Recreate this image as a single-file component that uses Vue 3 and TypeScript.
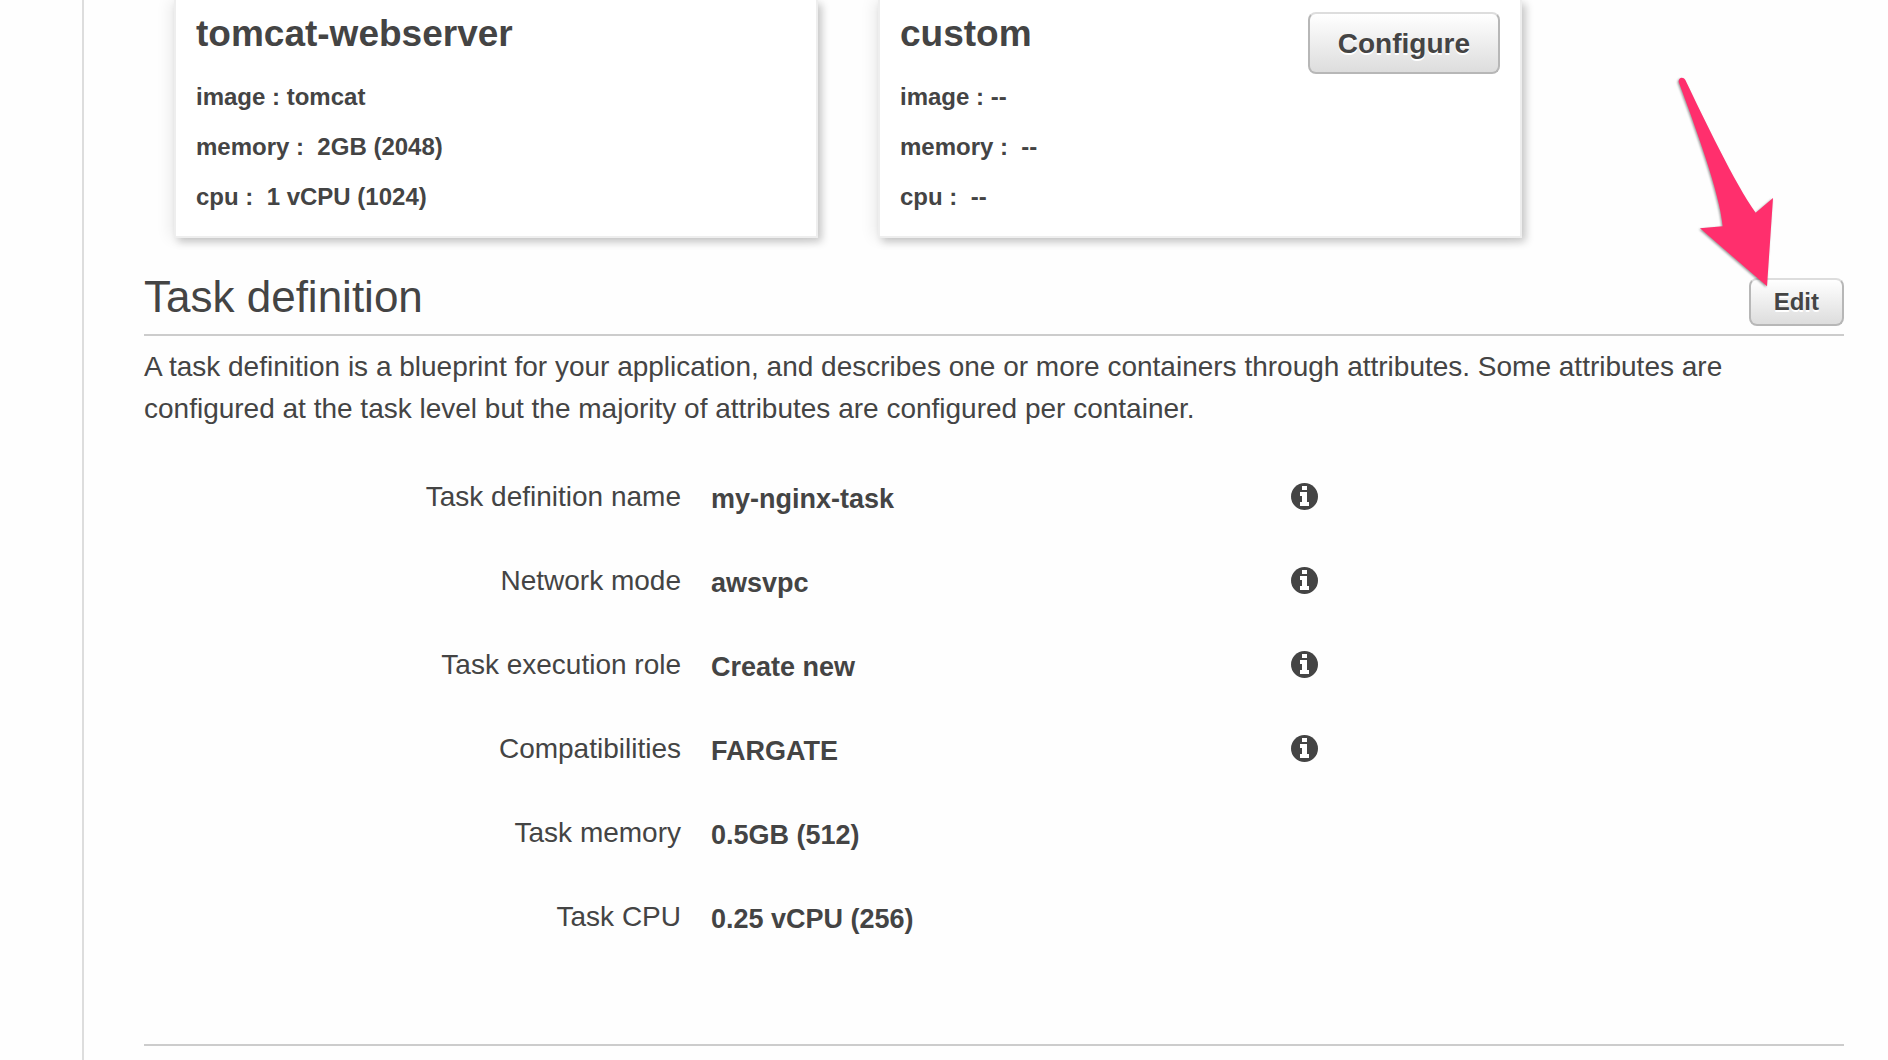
<script setup lang="ts">
interface ContainerCard {
  name: string
  image: string
  memory: string
  cpu: string
  configurable: boolean
}

interface TaskField {
  label: string
  value: string
  info: boolean
}

const containers: ContainerCard[] = [
  { name: 'tomcat-webserver', image: 'tomcat', memory: '2GB (2048)', cpu: '1 vCPU (1024)', configurable: false },
  { name: 'custom', image: '--', memory: '--', cpu: '--', configurable: true },
]

const fields: TaskField[] = [
  { label: 'Task definition name', value: 'my-nginx-task', info: true },
  { label: 'Network mode', value: 'awsvpc', info: true },
  { label: 'Task execution role', value: 'Create new', info: true },
  { label: 'Compatibilities', value: 'FARGATE', info: true },
  { label: 'Task memory', value: '0.5GB (512)', info: false },
  { label: 'Task CPU', value: '0.25 vCPU (256)', info: false },
]
</script>

<template>
  <div class="page">
    <main class="content">
      <section class="cards">
        <article v-for="card in containers" :key="card.name" class="card">
          <div class="card-text">
            <h3 class="card-title">{{ card.name }}</h3>
            <p class="card-line">image : {{ card.image }}</p>
            <p class="card-line">memory :&nbsp; {{ card.memory }}</p>
            <p class="card-line">cpu :&nbsp; {{ card.cpu }}</p>
          </div>
          <button v-if="card.configurable" type="button" class="btn btn-large">Configure</button>
        </article>
      </section>

      <section class="task">
        <header class="task-header">
          <h2 class="task-title">Task definition</h2>
          <button type="button" class="btn">Edit</button>
          <svg class="arrow" viewBox="108 48 300 639" aria-hidden="true">
            <path
              d="M116 66 C115 51 130 49 136 60 C190 172 285 372 347 458 L399 414 L381 679 L180 505 L248 499 C240 400 162 190 116 66 Z"
              fill="#ff2f6d"
            />
          </svg>
        </header>

        <p class="task-intro">
          A task definition is a blueprint for your application, and describes one or more containers through
          attributes. Some attributes are configured at the task level but the majority of attributes are configured
          per container.
        </p>

        <dl class="fields">
          <div v-for="field in fields" :key="field.label" class="field">
            <dt class="field-label">{{ field.label }}</dt>
            <dd class="field-value">{{ field.value }}</dd>
            <dd v-if="field.info" class="field-info">
              <button type="button" class="info" :aria-label="`About ${field.label}`">
                <svg viewBox="0 0 27 27" aria-hidden="true">
                  <circle cx="13.5" cy="13.5" r="13.5" fill="#444" />
                  <path d="M11 3h5v4h-5z M9 9h7v10h2v4H9v-4h2v-6H9z" fill="#fff" />
                </svg>
              </button>
            </dd>
          </div>
        </dl>
      </section>
    </main>
  </div>
</template>

<style>
body {
  background: #fefefe;
}
</style>

<style scoped>
.page {
  box-sizing: border-box;
  min-height: 100vh;
  padding-left: 82px;
  display: flex;
  color: #444;
  font-family: "Liberation Sans", Arial, sans-serif;
  font-size: 28px;
  overflow: hidden;
}

.content {
  flex: 1;
  min-width: 0;
  padding: 0 44px 14px 60px;
  border-left: 2px solid #ddd;
}

h2,
h3,
p,
dl,
dd {
  margin: 0;
}

.cards {
  display: flex;
  gap: 60px;
  padding-left: 30px;
}

.card {
  box-sizing: border-box;
  flex: 0 1 644px;
  display: flex;
  justify-content: space-between;
  align-items: flex-start;
  padding: 12px 20px 14px;
  border: 2px solid #eee;
  border-top: 0;
  background: #fff;
  box-shadow: 4px 4px 8px rgba(0, 0, 0, 0.2), -4px 0 14px rgba(0, 0, 0, 0.08);
}

.card-title {
  margin-bottom: 16px;
  font-size: 37px;
  line-height: 44px;
}

.card-line {
  font-size: 24px;
  font-weight: bold;
  line-height: 50px;
}

.btn {
  box-sizing: border-box;
  height: 48px;
  padding: 0 23px;
  border: 2px solid #b7b7b7;
  border-top-color: #ddd;
  border-radius: 8px;
  background: linear-gradient(#fff, #ddd);
  color: #444;
  font: bold 24px "Liberation Sans", Arial, sans-serif;
  text-shadow: 0 2px 0 #fff;
}

.btn-large {
  height: 62px;
  padding: 2px 28px 0;
  font-size: 28px;
}

.task {
  padding-bottom: 85px;
  border-bottom: 2px solid #ccc;
}

.task-header {
  position: relative;
  display: flex;
  justify-content: space-between;
  align-items: flex-start;
  margin-top: 40px;
  padding-bottom: 8px;
  border-bottom: 2px solid #ccc;
}

.task-title {
  font-size: 44px;
  font-weight: normal;
  line-height: 38px;
}

.arrow {
  position: absolute;
  right: 68px;
  bottom: 45px;
  width: 100px;
  height: 213px;
  filter: drop-shadow(-1px 1px 1px rgba(0, 0, 0, 0.4));
  pointer-events: none;
}

.task-intro {
  margin-top: 10px;
  line-height: 42px;
}

.fields {
  margin-top: 25px;
}

.field {
  display: grid;
  grid-template-columns: 567fr 580fr 553fr;
  height: 84px;
  line-height: 84px;
}

.field-label {
  padding-right: 30px;
  text-align: right;
}

.field-value {
  padding-top: 2px;
  font-size: 27px;
  font-weight: bold;
}

.field-info {
  display: flex;
  align-items: center;
  padding-bottom: 4px;
}

.info {
  width: 27px;
  height: 27px;
  padding: 0;
  border: 0;
  background: none;
}

.info svg {
  display: block;
}
</style>
